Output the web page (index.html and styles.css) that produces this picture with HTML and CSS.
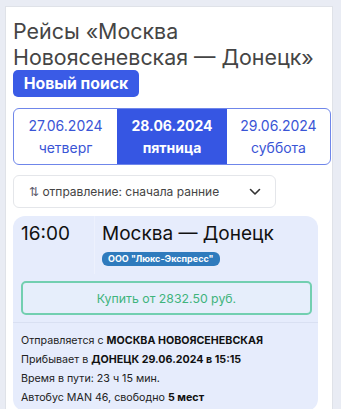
FILE: index.html
```html
<!DOCTYPE html>
<html lang="ru">
<head>
<meta charset="utf-8">
<link rel="stylesheet" href="styles.css">
</head>
<body>
<div class="page">
  <div class="panel">
    <h1 class="title">Рейсы «Москва Новоясеневская — Донецк»</h1>
    <button class="new-search">Новый поиск</button>
    <div class="dates">
      <div class="date"><span>27.06.2024</span><span>четверг</span></div>
      <div class="date active"><span>28.06.2024</span><span>пятница</span></div>
      <div class="date"><span>29.06.2024</span><span>суббота</span></div>
    </div>
    <div class="sort">
      <span class="sort-label"><span class="sort-icon">⇅</span> отправление: сначала ранние</span>
      <svg class="chev" width="12" height="8" viewBox="0 0 12 8"><path d="M1.5 1.5 L6 6 L10.5 1.5" fill="none" stroke="#333" stroke-width="1.6" stroke-linecap="round" stroke-linejoin="round"/></svg>
    </div>
    <div class="trip">
      <div class="trip-head">
        <div class="time">16:00</div>
        <div class="route">
          <div class="route-name">Москва — Донецк</div>
          <span class="badge">ООО "Люкс-Экспресс"</span>
        </div>
      </div>
      <div class="buy-wrap"><button class="buy">Купить от 2832.50 руб.</button></div>
      <div class="details">
        <div>Отправляется с <b>МОСКВА НОВОЯСЕНЕВСКАЯ</b></div>
        <div>Прибывает в <b>ДОНЕЦК 29.06.2024 в 15:15</b></div>
        <div>Время в пути: 23 ч 15 мин.</div>
        <div>Автобус MAN 46, свободно <b>5 мест</b></div>
      </div>
    </div>
  </div>
</div>
</body>
</html>
```

FILE: styles.css
```css
html, body {
  margin: 0;
  padding: 0;
  background: #e9ecf4;
  font-family: Inter, "Noto Sans", sans-serif;
  overflow: hidden;
}
.page {
  padding: 6px 0 0 5px;
  height: 409px;
  box-sizing: border-box;
}
.panel {
  width: 328px;
  height: 420px;
  box-sizing: border-box;
  background: #fff;
  border: 1px solid #dfe2e8;
  border-bottom: none;
  padding: 11px 0 0 7px;
}
.title {
  margin: 0;
  font-size: 21.4px;
  line-height: 26px;
  font-weight: 400;
  color: #454545;
  width: 316px;
}
.new-search {
  display: block;
  margin: 0;
  height: 27px;
  width: 126px;
  padding: 0;
  border: none;
  border-radius: 5px;
  background: #3a5be6;
  color: #fff;
  font-family: inherit;
  font-size: 15.8px;
  font-weight: 700;
}
.dates {
  margin-top: 11px;
  width: 318px;
  height: 57px;
  box-sizing: border-box;
  display: grid;
  grid-template-columns: 103px 110px 1fr;
  border: 1px solid #6f86ea;
  border-radius: 6px;
  overflow: hidden;
}
.date {
  display: flex;
  flex-direction: column;
  align-items: center;
  justify-content: center;
  font-size: 14px;
  line-height: 22px;
  color: #3a55d6;
}
.date.active {
  background: #3656e3;
  color: #fff;
  font-weight: 700;
}
.sort {
  margin-top: 10px;
  width: 263px;
  height: 33px;
  box-sizing: border-box;
  border: 1px solid #e4e6ea;
  border-radius: 6px;
  display: flex;
  align-items: center;
  justify-content: space-between;
  padding: 0 14px 0 15px;
  font-size: 12px;
  color: #444;
}
.sort-icon {
  color: #556;
}
.chev {
  display: block;
}
.trip {
  margin-top: 8px;
  width: 305px;
  background: #e6ecfc;
  border-radius: 12px;
  padding-bottom: 4px;
}
.trip-head {
  display: flex;
}
.time {
  width: 82px;
  box-sizing: border-box;
  padding: 6px 0 0 8px;
  font-size: 19px;
  line-height: 24px;
  color: #111;
  border-right: 1px solid #edf1fd;
}
.route {
  padding: 6px 0 8px 7px;
}
.route-name {
  font-size: 19px;
  line-height: 24px;
  color: #111;
}
.badge {
  display: inline-block;
  margin-top: 5px;
  background: #2f7bbd;
  color: #fff;
  font-size: 9px;
  font-weight: 700;
  line-height: 14px;
  padding: 0 6px;
  border-radius: 6px;
}
.buy-wrap {
  padding: 7px 6px 7px 8px;
  border-bottom: 1px solid #d9e0f2;
}
.buy {
  display: block;
  width: 100%;
  height: 34px;
  margin: 0;
  border: 2px solid #72cfb0;
  border-radius: 5px;
  background: #e6eefb;
  color: #3fb47c;
  font-family: inherit;
  font-size: 12.3px;
}
.details {
  padding: 8px 8px 0 8px;
  font-size: 10.7px;
  line-height: 19px;
  color: #222;
}
.details b {
  color: #111;
}
```
